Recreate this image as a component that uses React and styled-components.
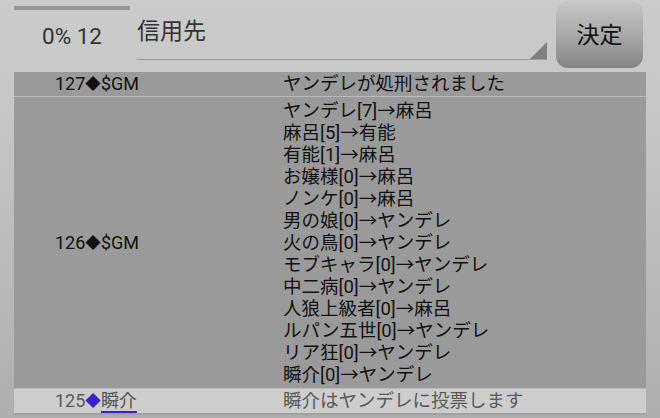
import React from "react";
import styled, { createGlobalStyle } from "styled-components";

const GlobalStyle = createGlobalStyle`
    html, body {
        margin: 0;
        padding: 0;
    }
    body {
        width: 660px;
        height: 418px;
        overflow: hidden;
        background: linear-gradient(to bottom, #cbcbcb 0%, #c7c7c7 25%, #aeaeae 100%);
        font-family: Roboto, "Noto Sans CJK JP", sans-serif;
    }
`;

const Page = styled.div`
    padding: 0 14px;
`;

// 상단 헤더
const Header = styled.div`
    display: flex;
    align-items: flex-start;
    height: 72px;
`;

const StatusCell = styled.div`
    width: 116px;
    padding-top: 6px;
`;

const StatusBar = styled.div`
    height: 4px;
    background-color: #999999;
`;

const StatusText = styled.div`
    margin-top: 13px;
    padding-left: 28px;
    font-size: 22.5px;
    line-height: 27px;
    color: #333333;
`;

const SelectField = styled.div`
    position: relative;
    margin-left: 7px;
    width: 410px;
    height: 60px;
    border-bottom: 1px solid #9a9a9a;
    box-sizing: border-box;
    padding-top: 18px;
    font-size: 23px;
    line-height: 27px;
    color: #333333;

    &::after {
        content: "";
        position: absolute;
        right: 0;
        bottom: 0;
        border-style: solid;
        border-width: 0 0 17px 17px;
        border-color: transparent transparent #808080 transparent;
    }
`;

const DecideButton = styled.button`
    margin: 1px 0 0 9px;
    width: 87px;
    height: 67px;
    border: none;
    border-radius: 12px;
    background: linear-gradient(to bottom, #c6c6c6 0%, #a9a9a9 50%, #848484 100%);
    font-family: Roboto, "Noto Sans CJK JP", sans-serif;
    font-size: 23px;
    color: #111111;
    padding: 0 0 4px;
`;

// 로그 테이블
const LogTable = styled.div`
    background-color: #9a9a9a;
`;

const LogRow = styled.div`
    display: grid;
    grid-template-columns: 269px 1fr;
    align-items: center;
    font-size: 18.5px;
    line-height: 22px;
    padding: ${(p) => (p.$multi ? "3px 0 2px" : "1px 0 1px")};
    min-height: 24px;
    box-sizing: border-box;
    color: ${(p) => (p.$light ? "#5a5a5a" : "#111111")};
    background-color: ${(p) => (p.$light ? "#cdcdcd" : "#9a9a9a")};
    border-bottom: ${(p) => (p.$light ? "2px solid #a2a2a2" : "1px solid #b9b9b9")};
`;

const Speaker = styled.div`
    padding-left: 41px;
    white-space: nowrap;
    font-size: 18px;
`;

const Diamond = styled.span`
    font-size: 15.5px;
    vertical-align: 1px;
    color: ${(p) => p.$color || "inherit"};
`;

const PlayerName = styled.span`
    color: #555555;
    text-decoration: underline;
    text-decoration-color: #3a22c8;
    text-decoration-thickness: 2px;
    text-underline-offset: 4px;
`;

const Message = styled.div`
    white-space: nowrap;
`;

const votes = [
    "ヤンデレ[7]→麻呂",
    "麻呂[5]→有能",
    "有能[1]→麻呂",
    "お嬢様[0]→麻呂",
    "ノンケ[0]→麻呂",
    "男の娘[0]→ヤンデレ",
    "火の鳥[0]→ヤンデレ",
    "モブキャラ[0]→ヤンデレ",
    "中二病[0]→ヤンデレ",
    "人狼上級者[0]→麻呂",
    "ルパン五世[0]→ヤンデレ",
    "リア狂[0]→ヤンデレ",
    "瞬介[0]→ヤンデレ",
];

export default function App() {
    return (
        <>
            <GlobalStyle />
            <Page>
                <Header>
                    <StatusCell>
                        <StatusBar />
                        <StatusText>0% 12</StatusText>
                    </StatusCell>
                    <SelectField>信用先</SelectField>
                    <DecideButton>決定</DecideButton>
                </Header>
                <LogTable>
                    <LogRow>
                        <Speaker>127<Diamond>◆</Diamond>$GM</Speaker>
                        <Message>ヤンデレが処刑されました</Message>
                    </LogRow>
                    <LogRow $multi>
                        <Speaker>126<Diamond>◆</Diamond>$GM</Speaker>
                        <Message>
                            {votes.map((v) => (
                                <div key={v}>{v}</div>
                            ))}
                        </Message>
                    </LogRow>
                    <LogRow $light>
                        <Speaker>125<Diamond $color="#3a22c8">◆</Diamond><PlayerName>瞬介</PlayerName></Speaker>
                        <Message>瞬介はヤンデレに投票します</Message>
                    </LogRow>
                </LogTable>
            </Page>
        </>
    );
}
